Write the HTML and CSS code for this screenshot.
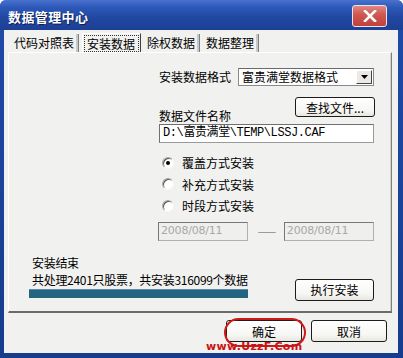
FILE: index.html
```html
<!DOCTYPE html>
<html>
<head>
<meta charset="utf-8">
<link rel="stylesheet" href="styles.css">
</head>
<body>
<div class="window">
  <div class="titlebar">
    <span class="title">数据管理中心</span>
    <span class="close"><svg width="14" height="12" viewBox="0 0 14 12"><path d="M2 1 L12 11 M12 1 L2 11" stroke="#fff" stroke-width="2.6" stroke-linecap="square"/></svg></span>
  </div>
  <div class="client">
    <div class="tabs">
      <span class="tab">代码对照表</span>
      <span class="tab active"><span class="focus">安装数据</span></span>
      <span class="tab">除权数据</span>
      <span class="tab">数据整理</span>
    </div>
    <div class="panel">
      <div class="form">
        <div class="row">
          <span class="label">安装数据格式</span>
          <span class="select"><span class="sel-text">富贵满堂数据格式</span><span class="arrow"><svg width="7" height="4" viewBox="0 0 7 4"><path d="M0 0 H7 L3.5 4 Z" fill="#000"/></svg></span></span>
        </div>
        <div class="row row2">
          <span class="label">数据文件名称</span>
          <span class="btn find">查找文件...</span>
        </div>
        <div class="input">D:\富贵满堂\TEMP\LSSJ.CAF</div>
        <div class="radios">
          <div class="radio"><span class="dot on"></span>覆盖方式安装</div>
          <div class="radio"><span class="dot"></span>补充方式安装</div>
          <div class="radio"><span class="dot"></span>时段方式安装</div>
        </div>
        <div class="dates">
          <span class="date">2008/08/11</span>
          <span class="dash">——</span>
          <span class="date">2008/08/11</span>
        </div>
      </div>
      <div class="status">
        <div class="status-left">
          <div class="line">安装结束</div>
          <div class="line">共处理2401只股票，共安装316099个数据</div>
          <div class="progress"></div>
        </div>
        <span class="btn exec">执行安装</span>
      </div>
    </div>
    <div class="footer">
      <span class="btn ok">确定</span>
      <span class="btn cancel">取消</span>
      <span class="ring"></span>
      <span class="watermark">www.UzzF.Com</span>
    </div>
  </div>
</div>
</body>
</html>
```
FILE: styles.css
```css
* { box-sizing: border-box; }
html, body { margin: 0; padding: 0; background: #fff; }
body { font-family: "Noto Sans CJK SC", "DejaVu Sans", sans-serif; font-size: 12px; color: #000; }

.window {
  width: 403px; height: 358px;
  background: linear-gradient(to bottom, #3a64c4 0px, #2450b0 8px, #1f4aa6 30px, #163c8e 100%);
  display: flex; flex-direction: column;
  padding: 0 5px 5px 4px;
  border-radius: 6px 6px 0 0;
}
.titlebar {
  height: 30px; flex: none;
  display: flex; align-items: center; justify-content: space-between;
  background: linear-gradient(to bottom, #4a72cf 0%, #2c58b8 25%, #21479f 60%, #1d4096 100%);
  margin: 0 -5px 0 -4px;
  padding: 0 16px 0 8px;
  border-radius: 6px 6px 0 0;
}
.title { color: #fff; font-weight: bold; font-size: 13px; letter-spacing: 0.4px; text-shadow: 1px 1px 0 #0a1f55; padding-top: 2px; }
.close {
  width: 35px; height: 22px; margin-top: 2px;
  border: 1px solid #e9e4f0; border-radius: 3px;
  background: linear-gradient(to bottom, #e08a82 0%, #d05a52 40%, #c0403a 100%);
  display: flex; align-items: center; justify-content: center;
}
.client {
  flex: 1; background: #f1f1ef;
  display: flex; flex-direction: column;
  padding: 3px 6px 0 4px;
  position: relative;
}
.tabs { display: flex; height: 19px; align-items: flex-end; padding-left: 2px; }
.tab {
  height: 18px; padding: 0 4px; line-height: 17px;
  border-right: 1px solid #808080; box-shadow: inset -2px 0 0 #c8c8c8;
  font-size: 12px; margin-right: 2px;
}
.tab:first-child { margin-right: 3px; }
.tab.active {
  height: 19px; border: 1px solid #fff; border-right: 1px solid #404040; border-bottom: none;
  padding: 1px 1px 0 1px; box-shadow: none; margin-right: 2px;
}
.focus { display: block; border: 1px dotted #333; line-height: 15px; padding: 0 3px 0 2px; }
.panel {
  height: 261px; flex: none;
  border: 1px solid #fff; border-right: 1px solid #808080; border-bottom: 2px solid #6a6a6a;
  box-shadow: inset -1px 0 0 #d0d0d0;
  padding: 15px 17px 0 23px;
  display: flex; flex-direction: column;
}
.form { margin-left: 127px; display: flex; flex-direction: column; }
.row { display: flex; align-items: center; justify-content: space-between; height: 18px; }
.label { font-size: 12px; line-height: 14px; }
.select {
  width: 136px; height: 18px; background: #fff;
  border: 1px solid #8a8a8a; border-top-color: #6a6a6a;
  display: flex; align-items: center; justify-content: space-between; padding-left: 3px;
}
.sel-text { line-height: 14px; }
.arrow {
  width: 16px; height: 14px; margin-right: 1px;
  background: #ece9e4; border: 1px solid #fff; border-right-color: #444; border-bottom-color: #444;
  display: flex; align-items: center; justify-content: center;
}
.row2 { margin-top: 11px; height: 26px; align-items: flex-start; }
.row2 .label { margin-top: 12px; }
.btn {
  display: flex; align-items: center; justify-content: center;
  border: 1px solid #1c1c1c; border-radius: 3px;
  background: linear-gradient(to bottom, #ffffff 0%, #f6f6f3 70%, #e8e6e0 100%);
  font-size: 12px;
}
.find { width: 80px; height: 20px; margin-right: -1px; }
.input {
  height: 19px; margin-top: 1px; background: #fff;
  border: 1px solid #9a9a9a; border-top-color: #707070; border-left-color: #707070;
  padding-left: 3px; line-height: 16px; font-family: "Liberation Mono", "Noto Sans CJK SC", monospace; font-size: 12px; letter-spacing: -0.4px;
}
.radios { margin-top: 9px; display: flex; flex-direction: column; }
.radio { display: flex; align-items: center; height: 21.5px; font-size: 12px; }
.dot {
  width: 12px; height: 12px; border-radius: 50%;
  border: 1px solid #a8a8a8; border-right-color: #f6f6f6; border-bottom-color: #f6f6f6;
  background: #fff; margin: 0 8px 0 3px; display: flex; align-items: center; justify-content: center;
  box-shadow: inset 1px 1px 0 #555;
}
.dot.on::after { content: ""; width: 4px; height: 4px; border-radius: 50%; background: #000; }
.dates { display: flex; align-items: center; margin-top: 5px; margin-left: -1px; }
.date {
  width: 91px; height: 19px; background: #efefed; color: #a8a8a8;
  border: 1px solid #b0b0b0; border-top-color: #777; border-left-color: #777;
  padding-left: 2px; line-height: 16px; font-family: "DejaVu Sans", sans-serif; font-size: 11px; letter-spacing: -0.2px;
}
.dash { width: 36px; text-align: center; color: #888; font-size: 11px; letter-spacing: -2px; }
.status { display: flex; justify-content: space-between; align-items: flex-end; margin-top: 13px; }
.status-left { display: flex; flex-direction: column; }
.line { line-height: 17px; font-size: 12px; letter-spacing: -0.3px; }
.progress { width: 219px; height: 9px; margin-top: 1px; margin-left: -3px; background: #236480; border-top: 1px solid #5d8aa6; }
.exec { width: 79px; height: 22px; margin-bottom: -3px; }
.footer { flex: 1; display: flex; justify-content: flex-end; align-items: flex-start; padding-top: 7px; gap: 9px; padding-right: 5px; }
.ok, .cancel { width: 76px; height: 22px; }
.ring {
  position: absolute; left: 220px; top: 288px; width: 82px; height: 29px;
  border: 2.5px solid #d01818; border-radius: 16px;
}
.watermark {
  position: absolute; left: 202px; top: 311px; line-height: 11px;
  color: #c81414; font-weight: bold; font-family: "DejaVu Sans", sans-serif; font-size: 11px; letter-spacing: 0.3px;
}
```
